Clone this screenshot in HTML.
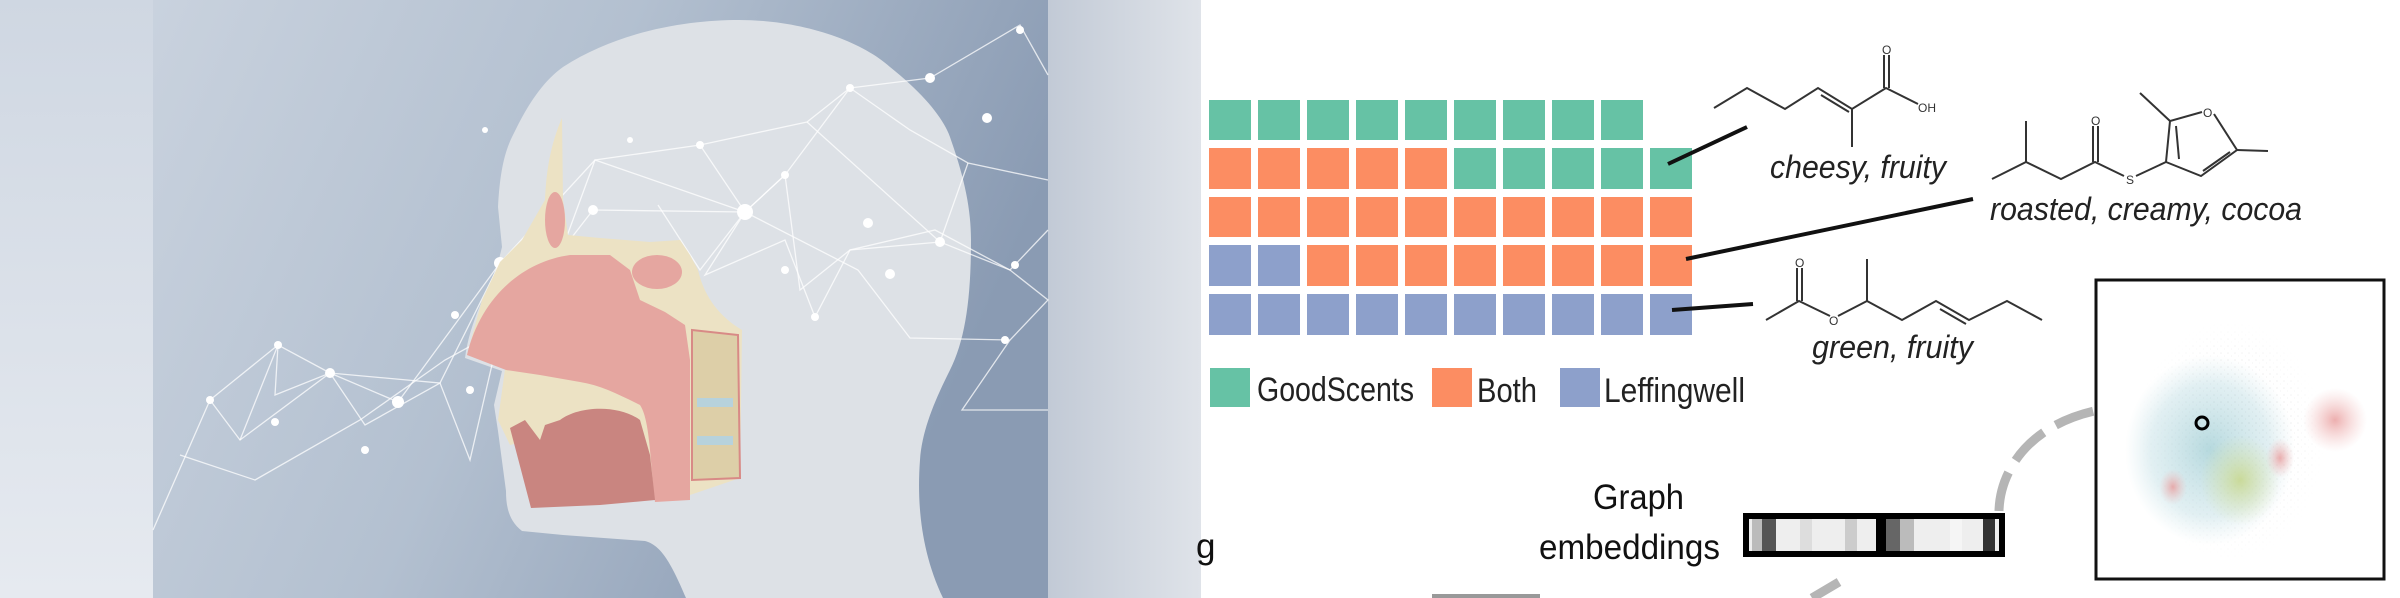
<!DOCTYPE html>
<html><head><meta charset="utf-8"><style>
html,body{margin:0;padding:0;width:2400px;height:598px;overflow:hidden;background:#fff}
svg text{font-family:"Liberation Sans Narrow","Liberation Sans",sans-serif}
</style></head><body>
<svg width="2400" height="598" viewBox="0 0 2400 598" xmlns="http://www.w3.org/2000/svg" style="position:absolute;left:0;top:0">
<defs>
<linearGradient id="bg" x1="0" y1="0" x2="1" y2="0.3">
<stop offset="0" stop-color="#c9d2de"/><stop offset="0.5" stop-color="#b3c0d0"/><stop offset="1" stop-color="#8a9bb3"/></linearGradient>
<linearGradient id="bgl" x1="0" y1="0" x2="0" y2="1"><stop offset="0" stop-color="#cfd7e2"/><stop offset="1" stop-color="#e6eaf0"/></linearGradient>
<linearGradient id="bgr" x1="0" y1="0" x2="1" y2="0"><stop offset="0" stop-color="#c2cad6"/><stop offset="1" stop-color="#dfe3e9"/></linearGradient>
<radialGradient id="cloud" cx="0.5" cy="0.5" r="0.5"><stop offset="0" stop-color="#a9d2d8" stop-opacity="0.85"/><stop offset="0.7" stop-color="#c4e0e6" stop-opacity="0.5"/><stop offset="1" stop-color="#cfe6ea" stop-opacity="0"/></radialGradient>
<radialGradient id="pink" cx="0.5" cy="0.5" r="0.5"><stop offset="0" stop-color="#e89a9a" stop-opacity="0.8"/><stop offset="1" stop-color="#f2c0c0" stop-opacity="0"/></radialGradient>
<radialGradient id="grn" cx="0.5" cy="0.5" r="0.5"><stop offset="0" stop-color="#c8d890" stop-opacity="0.9"/><stop offset="1" stop-color="#d8e4b0" stop-opacity="0"/></radialGradient>
<radialGradient id="fade" cx="0.5" cy="0.5" r="0.5"><stop offset="0" stop-color="#fff" stop-opacity="1"/><stop offset="1" stop-color="#fff" stop-opacity="0"/></radialGradient>
<mask id="m"><ellipse cx="2230" cy="440" rx="95" ry="120" fill="url(#fade)"/></mask>
<pattern id="dots" width="7" height="7" patternUnits="userSpaceOnUse"><circle cx="2" cy="3" r="0.8" fill="#777"/><circle cx="5.5" cy="6" r="0.6" fill="#999"/></pattern>
</defs>
<rect x="0" y="0" width="153" height="598" fill="url(#bgl)"/>
<rect x="153" y="0" width="895" height="598" fill="url(#bg)"/>
<rect x="1048" y="0" width="153" height="598" fill="url(#bgr)"/>
<!-- head -->
<path d="M686,598 C670,560 660,545 645,541 L563,535 522,531 C508,520 506,505 506,491 L498,431 494,405 502,371 465,358 C470,320 488,290 498,263 L502,247 498,207 C500,170 505,150 514,133 C530,100 545,80 563,67 C620,30 690,20 739,20 C800,20 860,40 890,67 C925,95 945,120 951,140 C965,180 971,210 971,240 C971,300 965,340 950,370 C935,400 922,430 920,460 C917,500 920,550 943,598 Z" fill="#dde1e6"/>
<!-- network -->
<g stroke="#ffffff" stroke-opacity="0.75" stroke-width="1.3" fill="none">
<polyline points="210,400 278,345 330,373 398,402 500,263 595,160 700,145 807,122 850,88 930,78 1020,25 1048,75"/>
<polyline points="153,530 210,400 240,440 330,373 365,425 440,383 470,460 500,330 593,210"/>
<polyline points="240,440 278,345 275,395 330,373 440,383 500,263 560,255 595,160 745,212 785,175 800,290 850,250 940,242 968,163"/>
<polyline points="700,145 745,212 705,275 785,240 815,317 850,250 935,230 1010,270 1048,300 1010,340 962,410 1048,410"/>
<polyline points="593,210 745,212 785,175 850,88 910,130 968,163 1048,180"/>
<polyline points="658,205 700,270 745,212 858,270 910,338 1010,340"/>
<polyline points="807,122 940,242 1010,270 1048,230"/>
<polyline points="500,330 445,360 360,420 255,480 180,455"/>
</g>
<g fill="#ffffff">
<circle cx="593" cy="210" r="5"/><circle cx="700" cy="145" r="4"/><circle cx="745" cy="212" r="8"/><circle cx="785" cy="175" r="4"/><circle cx="850" cy="88" r="4"/><circle cx="930" cy="78" r="5"/><circle cx="987" cy="118" r="5"/><circle cx="940" cy="242" r="5"/><circle cx="890" cy="274" r="5"/><circle cx="815" cy="317" r="4"/><circle cx="785" cy="270" r="4"/><circle cx="868" cy="223" r="5"/><circle cx="1015" cy="265" r="4"/><circle cx="1005" cy="340" r="4"/><circle cx="500" cy="263" r="6"/><circle cx="455" cy="315" r="4"/><circle cx="398" cy="402" r="6"/><circle cx="330" cy="373" r="5"/><circle cx="278" cy="345" r="4"/><circle cx="210" cy="400" r="4"/><circle cx="275" cy="422" r="4"/><circle cx="365" cy="450" r="4"/><circle cx="470" cy="390" r="4"/><circle cx="1020" cy="30" r="4"/><circle cx="630" cy="140" r="3"/><circle cx="485" cy="130" r="3"/>
</g>
<!-- anatomy -->
<path d="M562,118 C548,150 546,180 545,200 L522,240 500,262 482,300 467,355 506,362 498,420 510,445 530,440 540,500 690,495 740,478 742,330 C722,318 705,300 698,270 L690,255 680,240 650,242 600,238 568,235 563,200 Z" fill="#ece2c4"/>
<path d="M467,355 C480,300 520,262 570,255 L610,255 630,270 640,300 665,312 685,325 690,360 690,500 L655,502 C650,460 650,420 640,405 C620,395 600,385 580,382 L540,375 506,370 Z" fill="#e5a6a0"/>
<path d="M510,428 L525,420 540,440 545,425 560,420 C580,405 620,405 640,420 L650,455 655,500 600,505 531,508 Z" fill="#c98580"/>
<ellipse cx="555" cy="220" rx="10" ry="28" fill="#e5a6a0"/>
<ellipse cx="657" cy="272" rx="25" ry="17" fill="#e5a6a0"/>
<path d="M692,330 L738,335 740,478 692,480 Z" fill="#ddcfa8" stroke="#d88a86" stroke-width="2"/>
<rect x="697" y="398" width="36" height="9" fill="#b7d2dc"/><rect x="697" y="436" width="36" height="9" fill="#b7d2dc"/>
<!-- waffle -->
<g fill="#66c2a5">
<rect x="1209" y="100" width="42" height="40"/><rect x="1258" y="100" width="42" height="40"/><rect x="1307" y="100" width="42" height="40"/><rect x="1356" y="100" width="42" height="40"/><rect x="1405" y="100" width="42" height="40"/><rect x="1454" y="100" width="42" height="40"/><rect x="1503" y="100" width="42" height="40"/><rect x="1552" y="100" width="42" height="40"/><rect x="1601" y="100" width="42" height="40"/>
<rect x="1454" y="148" width="42" height="41"/><rect x="1503" y="148" width="42" height="41"/><rect x="1552" y="148" width="42" height="41"/><rect x="1601" y="148" width="42" height="41"/><rect x="1650" y="148" width="42" height="41"/>
</g>
<g fill="#fc8d62">
<rect x="1209" y="148" width="42" height="41"/><rect x="1258" y="148" width="42" height="41"/><rect x="1307" y="148" width="42" height="41"/><rect x="1356" y="148" width="42" height="41"/><rect x="1405" y="148" width="42" height="41"/>
<rect x="1209" y="197" width="42" height="40"/><rect x="1258" y="197" width="42" height="40"/><rect x="1307" y="197" width="42" height="40"/><rect x="1356" y="197" width="42" height="40"/><rect x="1405" y="197" width="42" height="40"/><rect x="1454" y="197" width="42" height="40"/><rect x="1503" y="197" width="42" height="40"/><rect x="1552" y="197" width="42" height="40"/><rect x="1601" y="197" width="42" height="40"/><rect x="1650" y="197" width="42" height="40"/>
<rect x="1307" y="245" width="42" height="41"/><rect x="1356" y="245" width="42" height="41"/><rect x="1405" y="245" width="42" height="41"/><rect x="1454" y="245" width="42" height="41"/><rect x="1503" y="245" width="42" height="41"/><rect x="1552" y="245" width="42" height="41"/><rect x="1601" y="245" width="42" height="41"/><rect x="1650" y="245" width="42" height="41"/>
</g>
<g fill="#8da0cb">
<rect x="1209" y="245" width="42" height="41"/><rect x="1258" y="245" width="42" height="41"/>
<rect x="1209" y="294" width="42" height="41"/><rect x="1258" y="294" width="42" height="41"/><rect x="1307" y="294" width="42" height="41"/><rect x="1356" y="294" width="42" height="41"/><rect x="1405" y="294" width="42" height="41"/><rect x="1454" y="294" width="42" height="41"/><rect x="1503" y="294" width="42" height="41"/><rect x="1552" y="294" width="42" height="41"/><rect x="1601" y="294" width="42" height="41"/><rect x="1650" y="294" width="42" height="41"/>
</g>
<!-- legend -->
<rect x="1210" y="368" width="40" height="39" fill="#66c2a5"/>
<text x="1257" y="401" font-size="34" fill="#222" textLength="157" lengthAdjust="spacingAndGlyphs">GoodScents</text>
<rect x="1432" y="368" width="40" height="39" fill="#fc8d62"/>
<text x="1477" y="402" font-size="34" fill="#222" textLength="60" lengthAdjust="spacingAndGlyphs">Both</text>
<rect x="1560" y="368" width="40" height="39" fill="#8da0cb"/>
<text x="1604" y="402" font-size="34" fill="#222" textLength="141" lengthAdjust="spacingAndGlyphs">Leffingwell</text>
<!-- connectors -->
<g stroke="#111" stroke-width="4"><line x1="1668" y1="164" x2="1747" y2="127"/><line x1="1686" y1="259" x2="1973" y2="199"/><line x1="1672" y1="310" x2="1753" y2="304"/></g>
<!-- molecules -->
<g stroke="#333" stroke-width="2" fill="none">
<polyline points="1714,108 1747,88 1785,109 1818,88 1852,109 1886,88 1918,104"/>
<line x1="1821" y1="95" x2="1849" y2="112"/>
<line x1="1852" y1="109" x2="1852" y2="147"/>
<line x1="1884" y1="88" x2="1884" y2="55"/><line x1="1889" y1="88" x2="1889" y2="55"/>
<polyline points="1992,179 2026,162 2061,179 2095,162 2124,176"/>
<line x1="2026" y1="162" x2="2026" y2="121"/>
<line x1="2093" y1="162" x2="2093" y2="126"/><line x1="2098" y1="162" x2="2098" y2="126"/>
<polyline points="2136,176 2166,162 2170,121 2202,112"/>
<polyline points="2214,114 2237,150 2201,176 2166,162"/>
<line x1="2176" y1="126" x2="2179" y2="159"/><line x1="2230" y1="152" x2="2203" y2="171"/>
<line x1="2170" y1="121" x2="2140" y2="93"/><line x1="2237" y1="150" x2="2268" y2="151"/>
<polyline points="1766,320 1799,301 1830,316"/>
<line x1="1797" y1="301" x2="1797" y2="268"/><line x1="1802" y1="301" x2="1802" y2="268"/>
<polyline points="1838,316 1867,301 1902,320 1936,301 1969,320 2007,301 2042,320"/>
<line x1="1867" y1="301" x2="1867" y2="259"/><line x1="1940" y1="309" x2="1966" y2="324"/>
</g>
<g font-size="12" fill="#333"><text x="1882" y="54">O</text><text x="1918" y="112">OH</text><text x="2091" y="125">O</text><text x="2126" y="184">S</text><text x="2203" y="117">O</text><text x="1795" y="267">O</text><text x="1829" y="325">O</text></g>
<g font-size="32" font-style="italic" fill="#222">
<text x="1770" y="178" textLength="176" lengthAdjust="spacingAndGlyphs">cheesy, fruity</text>
<text x="1990" y="220" textLength="312" lengthAdjust="spacingAndGlyphs">roasted, creamy, cocoa</text>
<text x="1812" y="358" textLength="161" lengthAdjust="spacingAndGlyphs">green, fruity</text>
</g>
<!-- embedding -->
<text x="1593" y="509" font-size="35" fill="#111" textLength="91" lengthAdjust="spacingAndGlyphs">Graph</text>
<text x="1539" y="559" font-size="35" fill="#111" textLength="181" lengthAdjust="spacingAndGlyphs">embeddings</text>
<text x="1196" y="558" font-size="35" fill="#111">g</text>
<line x1="1432" y1="596" x2="1540" y2="596" stroke="#999" stroke-width="4"/>
<rect x="1746" y="516" width="256" height="38" fill="#eee" stroke="#000" stroke-width="6"/>
<rect x="1752" y="519" width="10" height="32" fill="#bbb"/><rect x="1762" y="519" width="14" height="32" fill="#555"/><rect x="1800" y="519" width="12" height="32" fill="#ddd"/><rect x="1845" y="519" width="12" height="32" fill="#ccc"/>
<rect x="1876" y="516" width="10" height="38" fill="#000"/><rect x="1886" y="519" width="14" height="32" fill="#666"/><rect x="1900" y="519" width="14" height="32" fill="#bbb"/><rect x="1950" y="519" width="12" height="32" fill="#f5f5f5"/><rect x="1983" y="519" width="12" height="32" fill="#333"/>
<path d="M1999,511 C2000,470 2030,420 2110,408 C2150,404 2180,410 2202,423" fill="none" stroke="#b5b5b5" stroke-width="9" stroke-dasharray="40,14"/>
<line x1="1812" y1="598" x2="1839" y2="582" stroke="#b5b5b5" stroke-width="9"/>
<!-- plot -->
<rect x="2096" y="280" width="288" height="299" fill="#fff" stroke="#111" stroke-width="3"/>
<rect x="2130" y="315" width="200" height="250" fill="url(#dots)" opacity="0.35" mask="url(#m)"/>
<ellipse cx="2210" cy="450" rx="85" ry="95" fill="url(#cloud)"/>
<ellipse cx="2240" cy="480" rx="40" ry="45" fill="url(#grn)"/>
<ellipse cx="2335" cy="420" rx="32" ry="32" fill="url(#pink)"/>
<ellipse cx="2280" cy="458" rx="14" ry="20" fill="url(#pink)"/>
<ellipse cx="2173" cy="487" rx="14" ry="18" fill="url(#pink)"/>
<circle cx="2202" cy="423" r="6" fill="none" stroke="#000" stroke-width="3"/>
</svg>
</body></html>
